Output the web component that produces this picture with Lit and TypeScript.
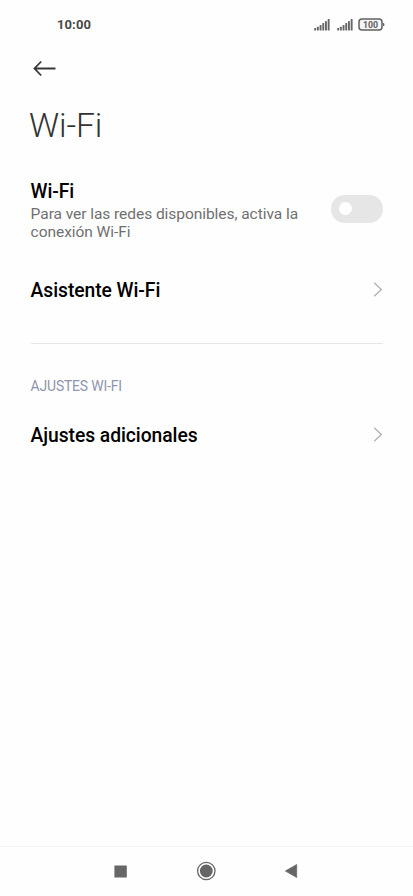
import { LitElement, html, css, svg } from "lit";
import { customElement, property } from "lit/decorators.js";

@customElement("status-bar")
class StatusBar extends LitElement {
  static styles = css`
    :host { display: flex; height: 48px; box-sizing: border-box; padding: 1px 28px 0 57px; align-items: center; justify-content: space-between; }
    .time { font-size: 13px; font-weight: 700; letter-spacing: 0.1px; color: #484848; }
    .icons { display: flex; align-items: center; gap: 7px; }
    .battery { margin-left: -2px; }
    svg { display: block; }
    .charge { font: 700 8.8px "Roboto", sans-serif; fill: #606060; }
  `;

  private signal() {
    return html`<svg width="16" height="12" viewBox="0 0 16 12">
      ${[2.5, 3.8, 5.5, 7.5, 9.5, 11.5].map(
        (h, i) => svg`<rect x=${0.2 + i * 2.7} y=${11.5 - h} width="1.9" height=${h} rx=".5" fill="#666"/>`
      )}
    </svg>`;
  }

  render() {
    return html`
      <span class="time">10:00</span>
      <div class="icons">
        ${this.signal()}${this.signal()}
        <svg class="battery" width="27" height="13" viewBox="0 0 27 13">
          <rect x="1" y="1" width="23" height="11" rx="3" fill="#f5f5f5" stroke="#606060" stroke-width="1.5" />
          <path d="M25 5h.6q.8 0 .8 1.500t-.8 1.500H25z" fill="#606060" />
          <text class="charge" x="12.5" y="9.7" text-anchor="middle">100</text>
        </svg>
      </div>
    `;
  }
}

@customElement("link-row")
class LinkRow extends LitElement {
  @property() label = "";

  static styles = css`
    :host { display: flex; align-items: center; justify-content: space-between; height: 60px; }
    .label { font-size: 19.3px; line-height: 22px; font-weight: 500; letter-spacing: -0.06px; color: #000; padding-top: 1px; }
    svg { display: block; }
  `;

  render() {
    return html`
      <span class="label">${this.label}</span>
      <svg width="10" height="16" viewBox="0 0 10 16">
        <path d="M1.200 .8 8.300 7.500 1.200 14.200" fill="none" stroke="#b4b4b4" stroke-width="1.400" />
      </svg>
    `;
  }
}

@customElement("app-root")
class AppRoot extends LitElement {
  static styles = css`
    :host { display: flex; flex-direction: column; height: 896px; background: #fefefe; font-family: "Roboto", sans-serif; overflow: hidden; }
    svg { display: block; }
    .back { padding: 12px 0 0 33px; height: 28px; }
    h1 { margin: 18px 0 0 29px; height: 40px; font-size: 33.6px; line-height: 40px; font-weight: 300; letter-spacing: -0.1px; color: #333; }
    main { flex: 1; padding: 35px 30px 0 30.6px; }
    .wifi { display: flex; align-items: center; justify-content: space-between; height: 60px; }
    .name { font-size: 19.3px; line-height: 22px; font-weight: 500; letter-spacing: -0.1px; color: #000; }
    .hint { margin-top: 2px; font-size: 15.55px; line-height: 18px; letter-spacing: -0.07px; color: #707070; white-space: nowrap; }
    .switch { width: 52px; height: 28px; box-sizing: border-box; border-radius: 14px; background: #e6e6e6; padding: 7.5px 8px; margin-top: -5px; }
    .knob { width: 13px; height: 13px; border-radius: 50%; background: #fff; }
    .assistant { margin-top: 19px; }
    .divider { height: 1px; background: #e6e6e6; margin-top: 23px; }
    .section { margin-top: 34px; font-size: 13.9px; line-height: 16px; letter-spacing: -0.15px; color: #8f95ae; }
    .extra { margin-top: 11px; }
    nav { height: 50px; box-sizing: border-box; border-top: 1px solid #f3f3f3; display: flex; align-items: center; justify-content: space-between; padding: 0 115px 1px 114px; }
  `;

  render() {
    return html`
      <status-bar></status-bar>
      <div class="back">
        <svg width="23" height="17" viewBox="0 0 23 17">
          <path d="M8.200 1.500 1.500 8.500l6.700 7M1.500 8.500H22.500" fill="none" stroke="#383838" stroke-width="1.800" />
        </svg>
      </div>
      <h1>Wi-Fi</h1>
      <main>
        <div class="wifi">
          <div>
            <div class="name">Wi-Fi</div>
            <div class="hint">Para ver las redes disponibles, activa la<br />conexión Wi-Fi</div>
          </div>
          <div class="switch"><div class="knob"></div></div>
        </div>
        <link-row class="assistant" label="Asistente Wi-Fi"></link-row>
        <div class="divider"></div>
        <div class="section">AJUSTES WI-FI</div>
        <link-row class="extra" label="Ajustes adicionales"></link-row>
      </main>
      <nav>
        <svg width="13" height="13" viewBox="0 0 13 13"><rect x=".4" y=".4" width="12.400" height="12.200" rx=".5" fill="#666" /></svg>
        <svg width="20" height="20" viewBox="0 0 20 20">
          <circle cx="10.300" cy="10" r="8.700" fill="none" stroke="#666" stroke-width="1.300" />
          <circle cx="10.300" cy="10" r="6.400" fill="#666" />
        </svg>
        <svg width="13" height="14" viewBox="0 0 13 14"><path d="M11.700 .5v13L.4 7z" fill="#666" stroke="#666" stroke-width=".7" stroke-linejoin="round" /></svg>
      </nav>
    `;
  }
}
